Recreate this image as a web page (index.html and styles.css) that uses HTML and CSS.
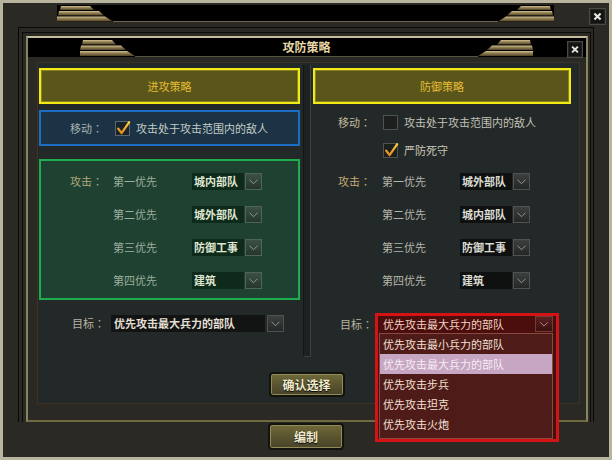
FILE: index.html
```html
<!DOCTYPE html>
<html lang="zh">
<head>
<meta charset="utf-8">
<title>攻防策略</title>
<link rel="stylesheet" href="styles.css">
</head>
<body>
<div class="screen">
  <svg class="defs" width="0" height="0" aria-hidden="true">
    <defs>
      <linearGradient id="gold" x1="0" y1="0" x2="0" y2="1">
        <stop offset="0" stop-color="#d4c496"/>
        <stop offset="0.35" stop-color="#9c8a5c"/>
        <stop offset="1" stop-color="#4e4226"/>
      </linearGradient>
      <linearGradient id="tick" x1="0" y1="0" x2="0" y2="1">
        <stop offset="0" stop-color="#ffd040"/>
        <stop offset="1" stop-color="#e88a18"/>
      </linearGradient>
    </defs>
  </svg>

  <div class="topbar">
    <svg class="stripes stripes-top" viewBox="0 0 56 17" preserveAspectRatio="none">
      <polygon points="4,1 33,1 37,5 3,5" fill="url(#gold)"/>
      <polygon points="2,6 42,6 47,10.5 1,10.5" fill="url(#gold)"/>
      <polygon points="0,11.5 48,11.5 56,16.5 0,16.5" fill="url(#gold)"/>
    </svg>
    <div class="band"></div>
    <svg class="stripes stripes-top flip" viewBox="0 0 56 17" preserveAspectRatio="none">
      <polygon points="4,1 33,1 37,5 3,5" fill="url(#gold)"/>
      <polygon points="2,6 42,6 47,10.5 1,10.5" fill="url(#gold)"/>
      <polygon points="0,11.5 48,11.5 56,16.5 0,16.5" fill="url(#gold)"/>
    </svg>
    <div class="close close-top">
      <svg viewBox="0 0 17 17"><path d="M5 5 L12 12 M12 5 L5 12" stroke="#e6e6e2" stroke-width="2.4"/></svg>
    </div>
  </div>

  <div class="window">
    <div class="window-mid">
      <div class="window-inner">
        <div class="titlebar">
          <svg class="stripes stripes-title" viewBox="0 0 55 16" preserveAspectRatio="none">
            <polygon points="3,0 32,0 36,4.5 2,4.5" fill="url(#gold)"/>
            <polygon points="1,5.5 41,5.5 46,10 0,10" fill="url(#gold)"/>
            <polygon points="0,11 47,11 55,16 0,16" fill="url(#gold)"/>
          </svg>
          <div class="title">攻防策略</div>
          <svg class="stripes stripes-title flip" viewBox="0 0 55 16" preserveAspectRatio="none">
            <polygon points="3,0 32,0 36,4.5 2,4.5" fill="url(#gold)"/>
            <polygon points="1,5.5 41,5.5 46,10 0,10" fill="url(#gold)"/>
            <polygon points="0,11 47,11 55,16 0,16" fill="url(#gold)"/>
          </svg>
          <div class="close close-title">
            <svg viewBox="0 0 17 17"><path d="M5 5 L12 12 M12 5 L5 12" stroke="#e6e6e2" stroke-width="2.4"/></svg>
          </div>
        </div>

        <div class="content">
          <div class="panel">
            <div class="columns">
              <!-- 进攻策略 -->
              <div class="col col-left">
                <div class="strategy-head">进攻策略</div>
                <div class="move-box">
                  <span class="lbl lbl-move lbl-blue">移动<span class="colon">：</span></span>
                  <svg class="check" viewBox="0 0 16 16">
                    <rect x="0.5" y="1.5" width="14" height="14" fill="#1a232b" stroke="#5c6670"/>
                    <path d="M3.2 8.6 L6.6 13.2 L14.2 2.2" fill="none" stroke="url(#tick)" stroke-width="2.2" stroke-linecap="round" stroke-linejoin="round"/>
                  </svg>
                  <span class="opt opt-blue">攻击处于攻击范围内的敌人</span>
                </div>
                <div class="attack-box">
                  <div class="arow">
                    <span class="lbl-a lbl-green-a">攻击<span class="colon">：</span></span>
                    <span class="pri pri-green">第一优先</span>
                    <div class="dd dd-green"><span class="dd-text">城内部队</span><span class="dd-btn"><svg viewBox="0 0 17 17"><polyline points="4,6.5 8.5,11 13,6.5" fill="none" stroke="#9aa89e" stroke-width="1"/></svg></span></div>
                  </div>
                  <div class="arow">
                    <span class="lbl-a"></span>
                    <span class="pri pri-green">第二优先</span>
                    <div class="dd dd-green"><span class="dd-text">城外部队</span><span class="dd-btn"><svg viewBox="0 0 17 17"><polyline points="4,6.5 8.5,11 13,6.5" fill="none" stroke="#9aa89e" stroke-width="1"/></svg></span></div>
                  </div>
                  <div class="arow">
                    <span class="lbl-a"></span>
                    <span class="pri pri-green">第三优先</span>
                    <div class="dd dd-green"><span class="dd-text">防御工事</span><span class="dd-btn"><svg viewBox="0 0 17 17"><polyline points="4,6.5 8.5,11 13,6.5" fill="none" stroke="#9aa89e" stroke-width="1"/></svg></span></div>
                  </div>
                  <div class="arow">
                    <span class="lbl-a"></span>
                    <span class="pri pri-green">第四优先</span>
                    <div class="dd dd-green"><span class="dd-text">建筑</span><span class="dd-btn"><svg viewBox="0 0 17 17"><polyline points="4,6.5 8.5,11 13,6.5" fill="none" stroke="#9aa89e" stroke-width="1"/></svg></span></div>
                  </div>
                </div>
                <div class="target target-left">
                  <span class="lbl-t">目标<span class="colon">：</span></span>
                  <div class="dd dd-wide"><span class="dd-text">优先攻击最大兵力的部队</span><span class="dd-btn"><svg viewBox="0 0 17 17"><polyline points="4,6.5 8.5,11 13,6.5" fill="none" stroke="#9a9e9c" stroke-width="1"/></svg></span></div>
                </div>
              </div>

              <div class="divider"></div>

              <!-- 防御策略 -->
              <div class="col col-right">
                <div class="strategy-head">防御策略</div>
                <div class="rrow rrow-first">
                  <span class="lbl lbl-move lbl-warm">移动<span class="colon">：</span></span>
                  <svg class="check" viewBox="0 0 16 16">
                    <rect x="0.5" y="1.5" width="14" height="14" fill="#1c1f1e" stroke="#4e5250"/>
                  </svg>
                  <span class="opt opt-gray">攻击处于攻击范围内的敌人</span>
                </div>
                <div class="rrow">
                  <span class="lbl lbl-move"></span>
                  <svg class="check" viewBox="0 0 16 16">
                    <rect x="0.5" y="1.5" width="14" height="14" fill="#1c1f1e" stroke="#4e5250"/>
                    <path d="M3.2 8.6 L6.6 13.2 L14.2 2.2" fill="none" stroke="url(#tick)" stroke-width="2.2" stroke-linecap="round" stroke-linejoin="round"/>
                  </svg>
                  <span class="opt opt-light">严防死守</span>
                </div>
                <div class="rattack">
                  <div class="arow">
                    <span class="lbl-a lbl-gold">攻击<span class="colon">：</span></span>
                    <span class="pri pri-gray">第一优先</span>
                    <div class="dd dd-dark"><span class="dd-text">城外部队</span><span class="dd-btn"><svg viewBox="0 0 17 17"><polyline points="4,6.5 8.5,11 13,6.5" fill="none" stroke="#a0a4a0" stroke-width="1"/></svg></span></div>
                  </div>
                  <div class="arow">
                    <span class="lbl-a"></span>
                    <span class="pri pri-gray">第二优先</span>
                    <div class="dd dd-dark"><span class="dd-text">城内部队</span><span class="dd-btn"><svg viewBox="0 0 17 17"><polyline points="4,6.5 8.5,11 13,6.5" fill="none" stroke="#a0a4a0" stroke-width="1"/></svg></span></div>
                  </div>
                  <div class="arow">
                    <span class="lbl-a"></span>
                    <span class="pri pri-gray">第三优先</span>
                    <div class="dd dd-dark"><span class="dd-text">防御工事</span><span class="dd-btn"><svg viewBox="0 0 17 17"><polyline points="4,6.5 8.5,11 13,6.5" fill="none" stroke="#a0a4a0" stroke-width="1"/></svg></span></div>
                  </div>
                  <div class="arow">
                    <span class="lbl-a"></span>
                    <span class="pri pri-gray">第四优先</span>
                    <div class="dd dd-dark"><span class="dd-text">建筑</span><span class="dd-btn"><svg viewBox="0 0 17 17"><polyline points="4,6.5 8.5,11 13,6.5" fill="none" stroke="#a0a4a0" stroke-width="1"/></svg></span></div>
                  </div>
                </div>
                <div class="target target-right">
                  <span class="lbl-t">目标<span class="colon">：</span></span>
                  <div class="select-wrap">
                    <div class="select-open">
                      <div class="sel-row">
                        <span class="sel-text">优先攻击最大兵力的部队</span>
                        <span class="sel-btn"><svg viewBox="0 0 17 17"><polyline points="4,6.5 8.5,11 13,6.5" fill="none" stroke="#c89c94" stroke-width="1"/></svg></span>
                      </div>
                      <ul class="sel-list">
                        <li class="item">优先攻击最小兵力的部队</li>
                        <li class="item item-hl">优先攻击最大兵力的部队</li>
                        <li class="item">优先攻击步兵</li>
                        <li class="item">优先攻击坦克</li>
                        <li class="item">优先攻击火炮</li>
                      </ul>
                    </div>
                  </div>
                </div>
              </div>
            </div>
            <div class="btn-row"><button class="btn">确认选择</button></div>
          </div>
        </div>
      </div>
    </div>
  </div>

  <div class="footer"><button class="btn btn-big">编制</button></div>
</div>
</body>
</html>
```

FILE: styles.css
```css
* {
  box-sizing: border-box;
  margin: 0;
  padding: 0;
}

body {
  width: 612px;
  height: 460px;
  overflow: hidden;
  background: #d6d2c4;
  font-family: "Noto Sans CJK SC", "Noto Sans", sans-serif;
  font-size: 11px;
  line-height: 1;
}

.screen {
  width: 612px;
  height: 460px;
  border: 3px solid #b8b49e;
  background: #2a2924;
}

.defs {
  display: block;
  width: 0;
  height: 0;
}

.colon {
  display: inline-block;
  width: 11px;
  text-align: center;
  font-family: "Noto Sans CJK TC", "Noto Sans CJK SC", sans-serif;
}

/* ---------- top ornament bar ---------- */
.topbar {
  display: flex;
  height: 17px;
  margin-top: 2px;
  padding-left: 54px;
  padding-right: 3px;
}

.stripes {
  display: block;
  flex: none;
  background: #000;
}

.stripes-top {
  width: 56px;
  height: 17px;
}

.flip {
  transform: scaleX(-1);
}

.band {
  flex: 1;
  background: #000;
  border-bottom: 1px solid #6c6654;
}

.close {
  flex: none;
  background: #141412;
  border: 1px solid #4c4a44;
  box-shadow: inset 0 0 0 1px #232320;
}

.close svg {
  display: block;
  width: 100%;
  height: 100%;
}

.close-top {
  width: 17px;
  height: 17px;
  margin-left: 35px;
  margin-top: 3px;
}

/* ---------- window frame ---------- */
.window {
  margin: 5px 0 0 15px;
  width: 576px;
  height: 395px;
  border: 1px solid #080806;
  border-bottom: 0;
  padding: 4px 2px 0 3px;
}

.window-mid {
  height: 100%;
  border: 1px solid #0b0b09;
  border-bottom: 0;
  padding: 3px 2px 0 3px;
}

.window-inner {
  height: 100%;
  border: 2px solid;
  border-color: #c4bc9a #8a8460 #6e6a42 #8a8460;
  display: flex;
  flex-direction: column;
}

.titlebar {
  flex: none;
  display: flex;
  height: 19px;
  background: #000;
  padding-left: 52px;
  padding-right: 3px;
}

.stripes-title {
  width: 55px;
  height: 16px;
  margin-top: 2px;
}

.title {
  flex: 1;
  height: 19px;
  border-bottom: 1px solid #5a5240;
  text-align: center;
  color: #e6d6a6;
  font-weight: bold;
  font-size: 12px;
  line-height: 18px;
}

.close-title {
  width: 16px;
  height: 17px;
  margin-left: 34px;
  margin-top: 3px;
}

.content {
  flex: 1;
  padding: 5px 6px 0 9px;
}

.panel {
  width: 543px;
  height: 342px;
  border: 1px solid #3e3226;
  background: #232928;
  padding: 5px 8px 6px 1px;
  display: flex;
  flex-direction: column;
}

.columns {
  display: flex;
  height: 289px;
}

.col-left {
  width: 261px;
  margin-right: 3px;
}

.divider {
  width: 8px;
  margin-right: 2px;
  margin-top: -3px;
  background: #1d2221;
  border-left: 1px solid #121615;
  border-right: 1px solid #3a403d;
  border-bottom: 1px solid #3a403d;
}

.col-right {
  width: 258px;
}

/* ---------- strategy boxes ---------- */
.strategy-head {
  height: 36px;
  border: 2px solid #f2ea14;
  box-shadow: inset 0 0 0 1px #8a8420;
  background: #5a561b;
  color: #e6bc34;
  display: flex;
  align-items: center;
  justify-content: center;
  font-size: 11px;
}

.move-box {
  margin-top: 6px;
  height: 36px;
  border: 2px solid #1c6ec2;
  background: #1b3345;
  display: flex;
  align-items: center;
  padding-left: 29px;
}

.lbl-move {
  width: 45px;
  flex: none;
}

.lbl-blue { color: #aab4ae; }
.lbl-warm { color: #c2b89c; }

.check {
  display: block;
  flex: none;
  width: 16px;
  height: 16px;
  margin-right: 5px;
}

.opt-blue { color: #c4ccc6; }
.opt-gray { color: #c2c2b8; }
.opt-light { color: #cac6ba; }

.attack-box {
  margin-top: 13px;
  height: 141px;
  border: 2px solid #1fae4e;
  background: #1e4131;
  padding: 4px 0 0 29px;
}

.arow {
  display: flex;
  align-items: center;
  height: 33px;
}

.lbl-a {
  flex: none;
  width: 43px;
}

.lbl-green-a { color: #b2aa7c; }
.lbl-gold { color: #c8aa78; }

.pri {
  flex: none;
  width: 79px;
}

.pri-green { color: #9cae9c; }
.pri-gray { color: #b4b4aa; }

/* ---------- dropdowns ---------- */
.dd {
  display: flex;
  height: 17px;
  flex: none;
}

.dd-text {
  width: 52px;
  padding-left: 2px;
  font-weight: bold;
  font-size: 11px;
  line-height: 17px;
  white-space: nowrap;
  overflow: hidden;
}

.dd-btn {
  width: 17px;
  height: 17px;
  margin-left: 1px;
  border: 1px solid;
}

.dd-btn svg {
  display: block;
  width: 15px;
  height: 15px;
}

.dd-green .dd-text {
  background: #0e2a1a;
  color: #dfe6d2;
}

.dd-green .dd-btn {
  background: linear-gradient(#3c5044, #25362c);
  border-color: #4e6456;
}

.dd-dark .dd-text {
  background: #0f1110;
  color: #dcdcd4;
}

.dd-dark .dd-btn,
.dd-wide .dd-btn {
  background: linear-gradient(#3c403e, #242726);
  border-color: #4e5250;
}

.dd-wide .dd-text {
  width: 154px;
  background: #121414;
  color: #e2ded2;
  padding-left: 3px;
}

.dd-wide .dd-btn {
  margin-left: 2px;
}

/* ---------- right column rows ---------- */
.rrow {
  display: flex;
  align-items: center;
  height: 20px;
  margin-top: 8px;
  padding-left: 25px;
}

.rattack {
  margin-top: 5px;
  padding-left: 25px;
}

.rattack .lbl-a { width: 44px; }
.rattack .pri { width: 78px; }

.target {
  display: flex;
  align-items: center;
  height: 17px;
}

.target-left {
  margin-top: 15px;
  padding-left: 33px;
}

.target-right {
  margin-top: 19px;
  padding-left: 27px;
}

.lbl-t {
  flex: none;
  width: 39px;
  color: #bab2a0;
}

/* ---------- open select (overlay) ---------- */
.select-wrap {
  position: relative;
  width: 174px;
  height: 17px;
}

.select-open {
  position: absolute;
  left: -4px;
  top: -3px;
  z-index: 5;
  width: 184px;
  border: 3px solid #d41414;
  background: #44100f;
  padding: 0 3px 0 1px;
}

.sel-row {
  display: flex;
  height: 17px;
}

.sel-text {
  flex: 1;
  background: #4c0d0d;
  color: #f0d6c4;
  padding-left: 4px;
  line-height: 17px;
  white-space: nowrap;
}

.sel-btn {
  width: 18px;
  height: 16px;
  margin-left: 1px;
  background: linear-gradient(#5c2222, #3a1010);
  border: 1px solid #7a3a34;
}

.sel-btn svg {
  display: block;
  width: 16px;
  height: 14px;
}

.sel-list {
  list-style: none;
  border: 1px solid #8a4a40;
  background: #4e1b19;
  padding: 0 0 4px 0;
}

.item {
  height: 20px;
  line-height: 20px;
  padding-left: 3px;
  color: #f2e0d4;
  white-space: nowrap;
}

.item-hl {
  background: #c6a6c2;
  color: #f8ecf4;
}

/* ---------- buttons ---------- */
.btn-row {
  display: flex;
  justify-content: center;
  margin-top: 15px;
  padding-left: 3px;
}

.btn {
  width: 76px;
  height: 25px;
  border: 2px solid #12120e;
  border-radius: 4px;
  background: linear-gradient(#716a3a, #5a5430 50%, #48442a);
  box-shadow: inset 0 0 0 1px #938a58;
  color: #f2ecce;
  font-family: "Noto Sans CJK SC", "Noto Sans", sans-serif;
  font-weight: bold;
  font-size: 12px;
  text-shadow: 0 1px 1px #000;
}

.footer {
  display: flex;
  justify-content: center;
  margin-top: 1px;
}

.btn-big {
  height: 27px;
}
```
